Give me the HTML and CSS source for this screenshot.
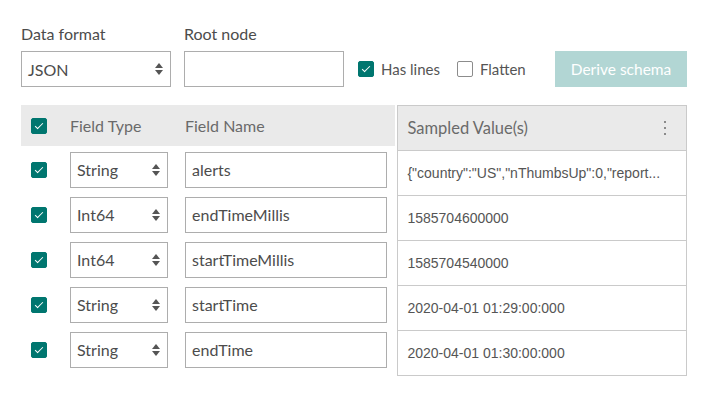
FILE: index.html
```html
<!DOCTYPE html>
<html lang="en">
<head>
    <meta charset="UTF-8">
    <title>Schema</title>
    <link rel="stylesheet" href="styles.css">
</head>
<body>
<div class="panel">
    <div class="top">
        <div class="field">
            <label class="lbl">Data format</label>
            <div class="select wide"><span>JSON</span><span class="arrows"></span></div>
        </div>
        <div class="field">
            <label class="lbl">Root node</label>
            <div class="input root"></div>
        </div>
        <div class="check-wrap">
            <span class="box on"></span><span>Has lines</span>
        </div>
        <div class="check-wrap">
            <span class="box"></span><span>Flatten</span>
        </div>
        <button class="derive">Derive schema</button>
    </div>

    <div class="schema">
        <div class="fields">
            <div class="fhead">
                <span class="box on"></span>
                <span class="col-type">Field Type</span>
                <span class="col-name">Field Name</span>
            </div>
            <div class="frow">
                <span class="box on"></span>
                <div class="select"><span>String</span><span class="arrows"></span></div>
                <div class="input name">alerts</div>
            </div>
            <div class="frow">
                <span class="box on"></span>
                <div class="select"><span>Int64</span><span class="arrows"></span></div>
                <div class="input name">endTimeMillis</div>
            </div>
            <div class="frow">
                <span class="box on"></span>
                <div class="select"><span>Int64</span><span class="arrows"></span></div>
                <div class="input name">startTimeMillis</div>
            </div>
            <div class="frow">
                <span class="box on"></span>
                <div class="select"><span>String</span><span class="arrows"></span></div>
                <div class="input name">startTime</div>
            </div>
            <div class="frow">
                <span class="box on"></span>
                <div class="select"><span>String</span><span class="arrows"></span></div>
                <div class="input name">endTime</div>
            </div>
        </div>

        <div class="samples">
            <div class="shead">
                <span>Sampled Value(s)</span>
                <span class="kebab"><i></i><i></i><i></i></span>
            </div>
            <div class="srow">{"country":"US","nThumbsUp":0,"report...</div>
            <div class="srow">1585704600000</div>
            <div class="srow">1585704540000</div>
            <div class="srow">2020-04-01 01:29:00:000</div>
            <div class="srow">2020-04-01 01:30:00:000</div>
        </div>
    </div>
</div>
</body>
</html>
```

FILE: styles.css
```css
body {
    margin: 0;
    background: #fff;
    font-family: Lato, "Noto Sans", sans-serif;
    color: #4c4c4c;
    font-size: 16px;
}
.panel {
    width: 666px;
    padding: 24px 0 0 21px;
}
.top {
    display: flex;
    align-items: flex-end;
    height: 63px;
}
.field {
    display: flex;
    flex-direction: column;
    margin-right: 13px;
}
.lbl {
    font-size: 16px;
    line-height: 20px;
    margin-bottom: 7px;
}
.select, .input {
    box-sizing: border-box;
    height: 36px;
    border: 1px solid #adadad;
    background: #fff;
    display: flex;
    align-items: center;
    padding: 0 6px;
    font-size: 16px;
    color: #4c4c4c;
}
.select {
    justify-content: space-between;
    width: 98px;
}
.select.wide {
    width: 150px;
}
.arrows {
    width: 8px;
    height: 12px;
    position: relative;
    margin-right: 1px;
}
.arrows::before, .arrows::after {
    content: "";
    position: absolute;
    left: 0;
    border-left: 4px solid transparent;
    border-right: 4px solid transparent;
}
.arrows::before {
    top: 0;
    border-bottom: 5px solid #555;
}
.arrows::after {
    bottom: 0;
    border-top: 5px solid #555;
}
.input.root {
    width: 160px;
}
.check-wrap {
    display: flex;
    align-items: center;
    height: 36px;
    margin-right: 16px;
    font-size: 15px;
    color: #555;
}
.check-wrap .box {
    margin: 0 7px 0 1px;
}
.box {
    box-sizing: border-box;
    display: inline-block;
    width: 16px;
    height: 16px;
    border: 1px solid #8c8c8c;
    border-radius: 2px;
    background: #fff;
    position: relative;
    flex: none;
}
.box.on {
    background: #00766f;
    border-color: #00766f;
}
.box.on::after {
    content: "";
    position: absolute;
    left: 5px;
    top: 2px;
    width: 3px;
    height: 7px;
    border: solid #fff;
    border-width: 0 1.5px 1.5px 0;
    transform: rotate(45deg);
}
.derive {
    margin-left: auto;
    height: 36px;
    width: 132px;
    border: none;
    background: #b2d6d4;
    color: #fff;
    font-family: inherit;
    font-size: 15.5px;
    padding: 0;
}
.schema {
    display: flex;
    margin-top: 18px;
}
.fields {
    width: 375px;
    margin-right: 2px;
}
.fhead {
    display: flex;
    align-items: center;
    height: 41px;
    background: #eaeaea;
    color: #6a6a6a;
    margin-bottom: 6px;
}
.fhead .box, .frow .box {
    margin-left: 10px;
}
.col-type {
    margin-left: 23px;
    width: 115px;
}
.frow {
    display: flex;
    align-items: center;
    height: 35px;
    margin-bottom: 10px;
}
.frow .select {
    margin-left: 23px;
}
.input.name {
    width: 202px;
    margin-left: 17px;
}
.samples {
    width: 288px;
    border: 1px solid #cacaca;
    align-self: flex-start;
}
.shead {
    display: flex;
    justify-content: space-between;
    align-items: center;
    height: 44px;
    background: #eaeaea;
    padding: 0 20px 0 9px;
    color: #6a6a6a;
    font-size: 16.5px;
    border-bottom: 1px solid #cacaca;
}
.kebab {
    display: flex;
    flex-direction: column;
    gap: 4px;
}
.kebab i {
    width: 2px;
    height: 2px;
    background: #8a8a8a;
}
.srow {
    height: 44px;
    line-height: 44px;
    padding-left: 9px;
    font-family: "Liberation Sans", Arial, sans-serif;
    font-size: 14px;
    color: #555;
    border-bottom: 1px solid #cacaca;
    white-space: nowrap;
    overflow: hidden;
}
.srow:last-child {
    border-bottom: none;
}
```
